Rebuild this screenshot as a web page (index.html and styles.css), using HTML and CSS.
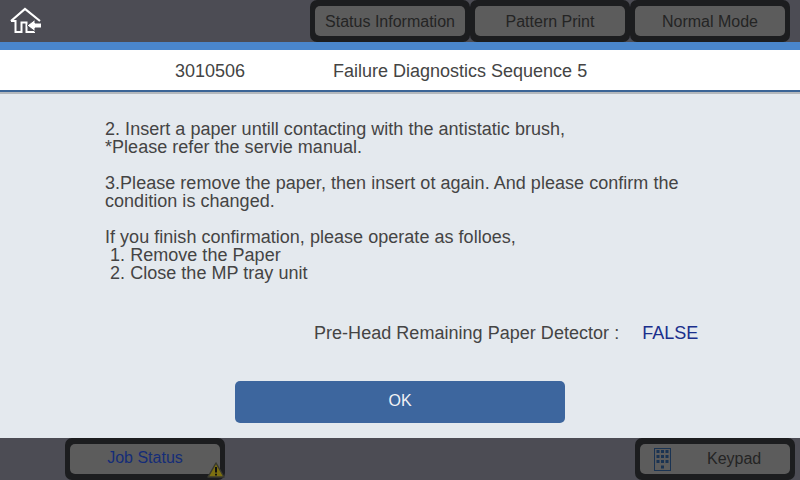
FILE: index.html
```html
<!DOCTYPE html>
<html>
<head>
    <title>Failure Diagnostics Sequence 5</title>
    <meta name="viewport" content="width=device-width, initial-scale=1">
    <link rel="stylesheet" href="styles.css">
</head>
<body>
    <div class="top-bar">
        <div class="home-icon">
            <svg width="36" height="32" viewBox="0 0 36 32">
                <path d="M3 17 L17 5 L32 17" fill="none" stroke="#fff" stroke-width="2.200"/>
                <path d="M3 17 H7.500 V28 H13.500 V18.500 H18.500 V28 H27" fill="none" stroke="#fff" stroke-width="2"/>
                <path d="M19 21.500 L27 15.500 V19 H33.500 V24 H27 V27.500 Z" fill="#fff" stroke="#4c4c54" stroke-width="1"/>
            </svg>
        </div>
        <div class="top-buttons">
            <div class="frame"><div class="btn top-btn">Status Information</div></div>
            <div class="frame"><div class="btn top-btn">Pattern Print</div></div>
            <div class="frame"><div class="btn top-btn">Normal Mode</div></div>
        </div>
    </div>
    <div class="accent"></div>
    <div class="title-bar">
        <span class="code">3010506</span>
        <span class="title">Failure Diagnostics Sequence 5</span>
    </div>
    <div class="content">
        <div class="message">
            <p>2. Insert a paper untill contacting with the antistatic brush,<br>*Please refer the servie manual.</p>
            <p>3.Please remove the paper, then insert ot again. And please confirm the<br>condition is changed.</p>
            <p>If you finish confirmation, please operate as folloes,<br>&nbsp;1. Remove the Paper<br>&nbsp;2. Close the MP tray unit</p>
        </div>
        <div class="detector">
            <span>Pre-Head Remaining Paper Detector :</span>
            <span class="value">FALSE</span>
        </div>
        <button class="ok">OK</button>
    </div>
    <div class="bottom-bar">
        <div class="frame">
            <div class="btn job">Job Status</div>
            <svg class="warn" width="18" height="16" viewBox="0 0 18 16">
                <path d="M9 1 L17 15 H1 Z" fill="#7d7010" stroke="#3a3a30" stroke-width="1.500" stroke-linejoin="round"/>
                <path d="M9 5 V10.500 M9 11.800 V13.500" stroke="#111" stroke-width="2" fill="none"/>
            </svg>
        </div>
        <div class="frame">
            <div class="btn keypad">
                <svg width="17" height="23" viewBox="0 0 17 23">
                    <rect x="0.500" y="0.500" width="16" height="22" fill="none" stroke="#1a3352"/>
                    <path d="M2.500 2 h3 v3 h-3 z M7 2 h3 v3 h-3 z M11.500 2 h3 v3 h-3 z M2.500 7 h3 v3 h-3 z M7 7 h3 v3 h-3 z M11.500 7 h3 v3 h-3 z M2.500 12 h3 v3 h-3 z M7 12 h3 v3 h-3 z M11.500 12 h3 v3 h-3 z M7 17.500 h3 v3 h-3 z" fill="#1a3352"/>
                </svg>
                <span>Keypad</span>
            </div>
        </div>
    </div>
</body>
</html>
```

FILE: styles.css
```css
html, body {
    margin: 0;
    padding: 0;
}
body {
    width: 800px;
    height: 480px;
    overflow: hidden;
    display: flex;
    flex-direction: column;
    font-family: "Liberation Sans", Arial, sans-serif;
    font-size: 18px;
    color: #444;
    background-color: #e4e9ee;
}
.top-bar {
    height: 42px;
    display: flex;
    justify-content: space-between;
    background-color: #4c4c54;
}
.home-icon {
    padding: 4px 0 0 8px;
}
.top-buttons {
    display: flex;
    padding-right: 10px;
}
.frame {
    position: relative;
    width: 150px;
    height: 30px;
    padding: 6px 5px;
    background-color: #1c1d1f;
    border-radius: 7px;
    font-size: 16px;
}
.btn {
    height: 30px;
    line-height: 28px;
    text-align: center;
    color: #242424;
    background-color: #5c5c5c;
    border-radius: 5px;
}
.top-btn {
    line-height: 31px;
}
.accent {
    height: 8px;
    background-color: #4a86cc;
}
.title-bar {
    height: 40px;
    line-height: 42px;
    display: flex;
    background-color: #fff;
    border-bottom: 2px solid #3a6496;
    box-shadow: 0 2px 0 #b4b8bc;
}
.code {
    margin-left: 175px;
    width: 158px;
}
.content {
    flex: 1;
    display: flex;
    flex-direction: column;
    padding-top: 28px;
    box-sizing: border-box;
    letter-spacing: 0.03px;
}
.message {
    padding-left: 105px;
    line-height: 18px;
}
.message p {
    margin: 0 0 18px 0;
}
.detector {
    margin-top: 23px;
    padding-left: 314px;
    line-height: 20px;
    display: flex;
}
.value {
    margin-left: 23px;
    color: #1a2f8c;
}
.ok {
    width: 330px;
    height: 42px;
    margin: 38px auto 0 auto;
    padding: 0 0 2px 0;
    border: none;
    border-radius: 5px;
    background-color: #3d669e;
    color: #f0f2f5;
    font-family: inherit;
    font-size: 16px;
}
.bottom-bar {
    height: 42px;
    display: flex;
    justify-content: space-between;
    padding: 0 5px 0 65px;
    background-color: #4c4c54;
}
.job {
    color: #142c78;
}
.warn {
    position: absolute;
    right: 0;
    bottom: 2px;
}
.keypad {
    display: flex;
    align-items: center;
    color: #242424;
    padding-left: 14px;
}
.keypad span {
    margin-left: 36px;
}
```
